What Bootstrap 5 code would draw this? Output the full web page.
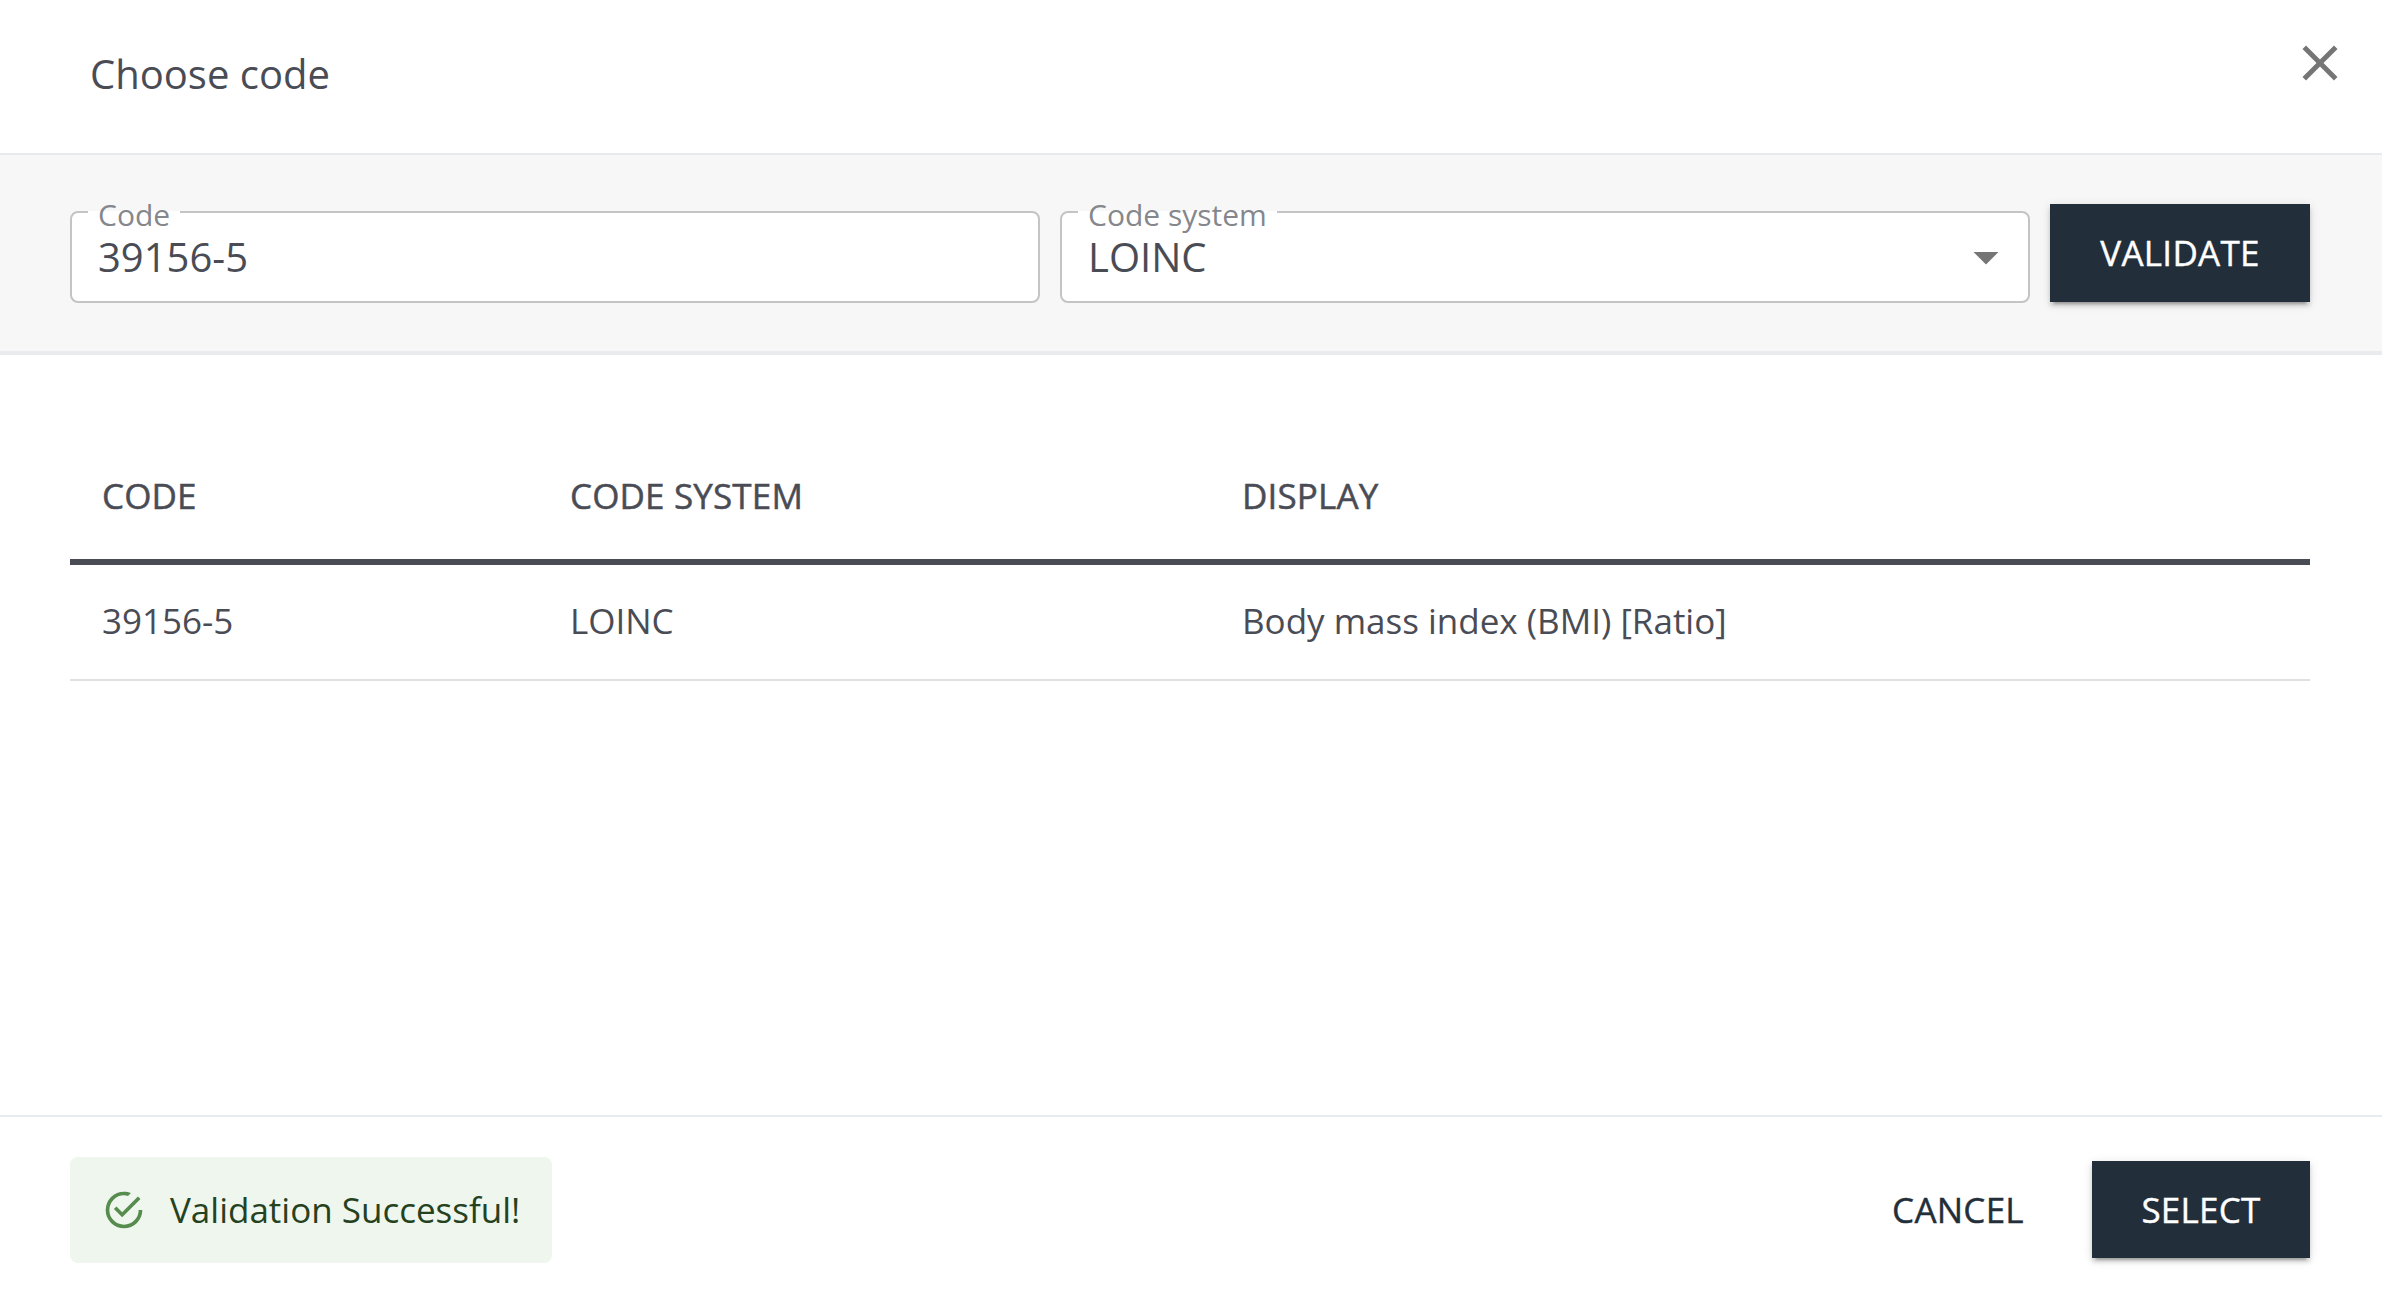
<!DOCTYPE html>
<html lang="en">
<head>
<meta charset="utf-8">
<meta name="viewport" content="width=device-width, initial-scale=1">
<title>Choose code</title>
<link href="https://cdn.jsdelivr.net/npm/bootstrap@5.3.0/dist/css/bootstrap.min.css" rel="stylesheet">
<style>
  body { font-family: "Open Sans", sans-serif; font-size: 35px; line-height: 1.5; color: #4a4c55; letter-spacing: 0; }
  .dialog-head { height: 155px; padding: 33px 32px 0 90px; border-bottom: 2px solid #e8ebee; }
  .dialog-title { font-size: 40px; line-height: 60px; margin-top: 11px; font-weight: 400; }
  .close-btn { width: 60px; height: 60px; color: #757575; }
  .search-bar { height: 200px; padding: 49px 72px 0 70px; gap: 20px; background: #f7f7f7; border-bottom: 4px solid #e9ebee; }
  .outlined { height: 92px; margin-top: 7px; border: 2px solid #c4c4c4; border-radius: 8px; background: #fff; font-size: 40px; padding: 14px 26px 0 26px; line-height: 60px; }
  .outlined-label { top: -15px; left: 16px; padding: 0 10px 0 10px; font-size: 30px; line-height: 34px; color: #85878d; background: linear-gradient(transparent 13px, #fff 13px); }
  .caret-icon { width: 60px; height: 60px; right: 12px; top: 14px; color: #757575; }
  .btn-flat { --bs-btn-font-size: 35px; --bs-btn-border-width: 0; --bs-btn-border-radius: 0; --bs-btn-line-height: 60px; --bs-btn-padding-y: 0; --bs-btn-padding-x: 0; --bs-btn-font-weight: 500; --bs-btn-color: #222e3a; height: 97px; letter-spacing: .25px; -webkit-text-stroke: .4px currentColor; }
  .btn-navy { --bs-btn-color: #fff; --bs-btn-bg: #222e3a; --bs-btn-hover-bg: #222e3a; --bs-btn-hover-color: #fff; box-shadow: 0 6px 2px -4px rgba(0,0,0,.2), 0 4px 4px rgba(0,0,0,.14), 0 2px 10px rgba(0,0,0,.12); }
  .btn-validate { width: 260px; height: 98px; }
  .btn-cancel { width: 228px; }
  .btn-select { width: 218px; }
  .results { padding: 78px 72px 0 70px; }
  .code-table { --bs-table-color: #4a4c55; --bs-table-bg: transparent; table-layout: fixed; border-collapse: separate; border-spacing: 0; }
  .code-table > thead > tr > th { height: 132px; padding: 0 32px; border-bottom: 6px solid #4a4c55; font-weight: 500; vertical-align: middle; letter-spacing: .15px; -webkit-text-stroke: .5px currentColor; }
  .code-table > tbody > tr > td { height: 116px; padding: 0 32px 1px; border-bottom: 2px solid #e0e0e0; vertical-align: middle; }
  .code-table > thead, .code-table > tbody { border: 0; }
  .dialog-foot { height: 183px; padding: 0 72px 0 70px; border-top: 2px solid #e8ebee; }
  .ok-alert { height: 106px; margin-top: 40px; padding: 0 32px; border: 0; border-radius: 8px; background: #eff6ee; color: #25421f; }
  .ok-icon { width: 44px; height: 44px; color: #568c4d; margin-right: 24px; }
  .foot-actions { margin-top: 44px; gap: 20px; }
</style>
</head>
<body>
<div class="d-flex flex-column vh-100 overflow-hidden bg-white">
  <header class="dialog-head d-flex justify-content-between align-items-start flex-shrink-0">
    <h1 class="dialog-title mb-0">Choose code</h1>
    <button class="close-btn btn border-0 p-0 d-flex" type="button" aria-label="Close">
      <svg width="60" height="60" viewBox="0 0 24 24" fill="currentColor"><path d="M19 6.41L17.59 5 12 10.59 6.41 5 5 6.41 10.59 12 5 17.59 6.41 19 12 13.41 17.59 19 19 17.59 13.41 12z"/></svg>
    </button>
  </header>
  <section class="search-bar d-flex align-items-start flex-shrink-0">
    <div class="outlined position-relative flex-fill w-100">
      <span class="outlined-label position-absolute">Code</span>39156-5
    </div>
    <div class="outlined position-relative flex-fill w-100">
      <span class="outlined-label position-absolute">Code system</span>LOINC
      <svg class="caret-icon position-absolute" viewBox="0 0 24 24" fill="currentColor"><path d="M7 10l5 5 5-5z"/></svg>
    </div>
    <button class="btn btn-flat btn-navy btn-validate flex-shrink-0" type="button">VALIDATE</button>
  </section>
  <main class="results flex-grow-1">
    <table class="table code-table mb-0">
      <colgroup><col style="width:468px"><col style="width:672px"><col></colgroup>
      <thead><tr><th>CODE</th><th>CODE SYSTEM</th><th>DISPLAY</th></tr></thead>
      <tbody><tr><td>39156-5</td><td>LOINC</td><td>Body mass index (BMI) [Ratio]</td></tr></tbody>
    </table>
  </main>
  <footer class="dialog-foot d-flex justify-content-between align-items-start flex-shrink-0">
    <div class="ok-alert alert d-flex align-items-center mb-0">
      <svg class="ok-icon" viewBox="0 0 24 24" fill="currentColor"><path d="M20,12A8,8 0 0,1 12,20A8,8 0 0,1 4,12A8,8 0 0,1 12,4C12.76,4 13.5,4.11 14.2,4.31L15.77,2.74C14.61,2.26 13.34,2 12,2A10,10 0 0,0 2,12A10,10 0 0,0 12,22A10,10 0 0,0 22,12M7.91,10.08L6.5,11.5L11,16L21,6L19.59,4.58L11,13.17L7.91,10.08Z"/></svg>
      Validation Successful!
    </div>
    <div class="foot-actions d-flex">
      <button class="btn btn-flat btn-cancel" type="button">CANCEL</button>
      <button class="btn btn-flat btn-navy btn-select" type="button">SELECT</button>
    </div>
  </footer>
</div>
<script src="https://cdn.jsdelivr.net/npm/bootstrap@5.3.0/dist/js/bootstrap.bundle.min.js"></script>
</body>
</html>
